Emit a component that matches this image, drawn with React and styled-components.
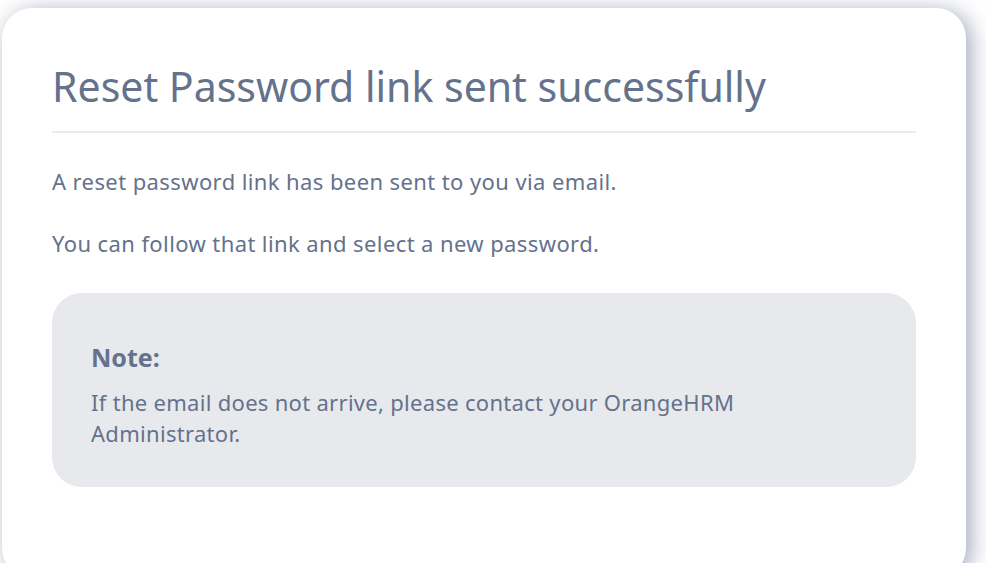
import React from "react";
import styled, { createGlobalStyle } from "styled-components";

const GlobalStyle = createGlobalStyle`
    html, body {
        margin: 0;
        padding: 0;
        background: #ffffff;
        overflow: hidden;
    }
    body {
        font-family: "Noto Sans", "Open Sans", sans-serif;
        color: #64728c;
    }
`;

const Page = styled.div`
    width: 986px;
    height: 563px;
    padding: 8px 20px 0 2px;
    box-sizing: border-box;
`;

const Card = styled.div`
    width: 964px;
    height: 570px;
    box-sizing: border-box;
    background: #fff;
    border-radius: 30px;
    box-shadow: 5px 3px 22px rgba(90, 100, 135, 0.55);
    padding: 50px 50px 0 50px;
`;

const Title = styled.h1`
    margin: 0;
    font-size: 41px;
    font-weight: 400;
    line-height: 56px;
    color: #64728c;
    padding-bottom: 17px;
    border-bottom: 2px solid #e8eaef;
`;

const Paragraph = styled.p`
    margin: ${(props) => props.gap || "0"};
    font-size: 22px;
    letter-spacing: 0.4px;
    line-height: 30px;
    color: #64728c;
`;

const NoteBox = styled.div`
    margin-top: 35px;
    background: #e8e9ed;
    border-radius: 30px;
    padding: 48px 39px 38px;
    display: flex;
    flex-direction: column;
    gap: 14px;
`;

const NoteTitle = styled.div`
    font-size: 25px;
    font-weight: 700;
    line-height: 32px;
    color: #64728c;
`;

const NoteText = styled.div`
    font-size: 22px;
    letter-spacing: 0.3px;
    line-height: 31px;
    color: #64728c;
    max-width: 700px;
`;

export default function App() {
    return (
        <>
            <GlobalStyle />
            <Page>
                <Card>
                    <Title>Reset Password link sent successfully</Title>
                    <Paragraph gap="33px 0 0">A reset password link has been sent to you via email.</Paragraph>
                    <Paragraph gap="32px 0 0">You can follow that link and select a new password.</Paragraph>
                    <NoteBox>
                        <NoteTitle>Note:</NoteTitle>
                        <NoteText>
                            If the email does not arrive, please contact your OrangeHRM Administrator.
                        </NoteText>
                    </NoteBox>
                </Card>
            </Page>
        </>
    );
}
